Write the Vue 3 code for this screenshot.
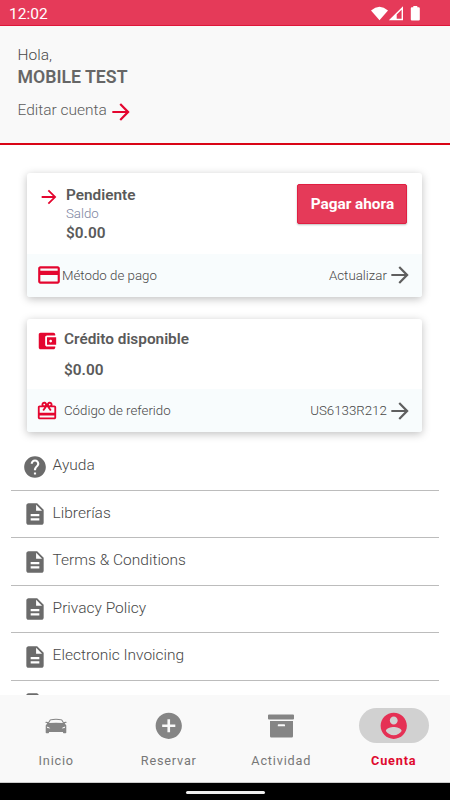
<script setup>
const links = [
  { label: 'Ayuda', icon: 'help' },
  { label: 'Librerías', icon: 'doc' },
  { label: 'Terms & Conditions', icon: 'doc' },
  { label: 'Privacy Policy', icon: 'doc' },
  { label: 'Electronic Invoicing', icon: 'doc' },
  { label: '', icon: 'doc' }
]
const paths = {
  arrow: 'M12 4l-1.41 1.41L16.17 11H4v2h12.17l-5.58 5.59L12 20l8-8z',
  card: 'M20 4H4c-1.11 0-1.99.89-1.99 2L2 18c0 1.11.89 2 2 2h16c1.11 0 2-.89 2-2V6c0-1.11-.89-2-2-2zm0 14H4v-6h16v6zm0-10H4V6h16v2z',
  wallet: 'M21 18v1c0 1.1-.9 2-2 2H5c-1.11 0-2-.9-2-2V5c0-1.1.89-2 2-2h14c1.1 0 2 .9 2 2v1h-9c-1.11 0-2 .9-2 2v8c0 1.1.89 2 2 2h9zm-9-2h10V8H12v8zm4-2.5c-.83 0-1.5-.67-1.5-1.5s.67-1.5 1.5-1.5 1.5.67 1.5 1.5-.67 1.5-1.5 1.5z',
  gift: 'M20 6h-2.18c.11-.31.18-.65.18-1 0-1.66-1.34-3-3-3-1.05 0-1.96.54-2.5 1.35l-.5.67-.5-.68C10.96 2.54 10.05 2 9 2 7.34 2 6 3.34 6 5c0 .35.07.69.18 1H4c-1.11 0-1.99.89-1.99 2L2 19c0 1.11.89 2 2 2h16c1.11 0 2-.89 2-2V8c0-1.11-.89-2-2-2zm-5-2c.55 0 1 .45 1 1s-.45 1-1 1-1-.45-1-1 .45-1 1-1zM9 4c.55 0 1 .45 1 1s-.45 1-1 1-1-.45-1-1 .45-1 1-1zm11 15H4v-2h16v2zm0-5H4V8h5.08L7 10.83 8.62 12 11 8.76l1-1.36 1 1.36L15.38 12 17 10.83 14.92 8H20v6z',
  help: 'M12 2C6.48 2 2 6.48 2 12s4.48 10 10 10 10-4.48 10-10S17.52 2 12 2zm1 17h-2v-2h2v2zm2.07-7.75l-.9.92C13.45 12.9 13 13.5 13 15h-2v-.5c0-1.1.45-2.1 1.17-2.83l1.24-1.26c.37-.36.59-.86.59-1.41 0-1.1-.9-2-2-2s-2 .9-2 2H8c0-2.21 1.79-4 4-4s4 1.79 4 4c0 .88-.36 1.68-.93 2.25z',
  doc: 'M14 2H6c-1.1 0-1.99.9-1.99 2L4 20c0 1.1.89 2 1.99 2H18c1.1 0 2-.9 2-2V8l-6-6zm2 16H8v-2h8v2zm0-4H8v-2h8v2zm-3-5V3.500L18.500 9H13z',
  add: 'M12 2C6.48 2 2 6.48 2 12s4.48 10 10 10 10-4.48 10-10S17.52 2 12 2zm5 11h-4v4h-2v-4H7v-2h4V7h2v4h4v2z',
  user: 'M12 2C6.48 2 2 6.48 2 12s4.48 10 10 10 10-4.48 10-10S17.52 2 12 2zm0 3c1.66 0 3 1.34 3 3s-1.34 3-3 3-3-1.34-3-3 1.34-3 3-3zm0 14.2c-2.5 0-4.71-1.28-6-3.22.03-1.99 4-3.08 6-3.08 1.99 0 5.97 1.09 6 3.08-1.29 1.94-3.5 3.22-6 3.22z'
}
</script>

<template>
  <div class="screen">
    <div class="status">
      <span>12:02</span>
      <svg class="signals" width="52" height="18" viewBox="0 0 52 18">
        <path fill="#fff" d="M0 4.400Q8.500-2.800 17 4.400L8.500 14.200Z" />
        <path fill="#fff" fill-rule="evenodd" d="M17.800 14.300L32 0.300V14.300ZM25.700 12.800H30.600V3.800L25.700 8.500Z" />
        <path fill="#fff" d="M42.300 0h4v1.200h1.400q1.100 0 1.100 1.100v11.100q0 1.100-1.100 1.100h-6.800q-1.100 0-1.100-1.100V2.300q0-1.100 1.100-1.100h1.400z" />
      </svg>
    </div>

    <header class="head">
      <div class="hello">Hola,</div>
      <div class="name">MOBILE TEST</div>
      <div class="edit">
        <span>Editar cuenta</span>
        <svg class="red i26" viewBox="0 0 24 24"><path :d="paths.arrow" /></svg>
      </div>
    </header>

    <main class="body">
      <section class="card first">
        <div class="top">
          <svg class="red i22" viewBox="0 0 24 24"><path :d="paths.arrow" /></svg>
          <div class="info">
            <div class="title">Pendiente</div>
            <div class="saldo">Saldo</div>
            <div class="amount">$0.00</div>
          </div>
          <button class="pay">Pagar ahora</button>
        </div>
        <div class="foot">
          <svg class="red i26" viewBox="0 0 24 24"><path :d="paths.card" /></svg>
          <span>Método de pago</span>
          <span class="action">Actualizar</span>
          <svg class="grey i26" viewBox="0 0 24 24"><path :d="paths.arrow" /></svg>
        </div>
      </section>

      <section class="card second">
        <div class="top">
          <svg class="red i22" viewBox="0 0 24 24"><path :d="paths.wallet" /></svg>
          <div class="info">
            <div class="title">Crédito disponible</div>
            <div class="amount">$0.00</div>
          </div>
        </div>
        <div class="foot">
          <svg class="red i22" viewBox="0 0 24 24"><path :d="paths.gift" /></svg>
          <span class="code">Código de referido</span>
          <span class="action">US6133R212</span>
          <svg class="grey i26" viewBox="0 0 24 24"><path :d="paths.arrow" /></svg>
        </div>
      </section>

      <ul class="links">
        <li v-for="(l, i) in links" :key="i">
          <svg class="i26" viewBox="0 0 24 24"><path :d="paths[l.icon]" /></svg>
          <span>{{ l.label }}</span>
        </li>
      </ul>
    </main>

    <nav class="nav">
      <div class="tab">
        <div class="pill">
          <svg width="24" height="16" viewBox="0 0 24 16">
            <path fill-rule="evenodd" d="M1 4Q3.200 3.200 4.200 4.300L6 1.500Q12 .2 18 1.500L19.800 4.300Q20.800 3.200 23 4Q22.500 5 20.700 5.200L22.300 7.500V14.500Q22.300 15.200 21.500 15.200H19.700Q19 15.200 19 14.500V14H5V14.500Q5 15.200 4.300 15.200H2.500Q1.700 15.200 1.700 14.500V7.500L3.300 5.200Q1.500 5 1 4ZM5 5Q12 4.400 19 5L17.300 2.200Q12 1.300 6.700 2.200ZM2.800 8.600L3.200 9.900L6.300 10.500Q5.500 9.100 2.800 8.600ZM21.200 8.600Q18.500 9.100 17.700 10.500L20.800 9.900Z" />
          </svg>
        </div>
        <span>Inicio</span>
      </div>
      <div class="tab">
        <div class="pill"><svg class="i31" viewBox="0 0 24 24"><path :d="paths.add" /></svg></div>
        <span>Reservar</span>
      </div>
      <div class="tab">
        <div class="pill">
          <svg width="26" height="24" viewBox="0 0 26 24">
            <path fill-rule="evenodd" d="M1 .5H25Q26 .5 26 1.500V4.500Q26 5.500 25 5.500H1Q0 5.500 0 4.500V1.500Q0 .5 1 .5ZM2 7H25V22.300Q25 23.500 23.800 23.500H3.200Q2 23.500 2 22.300ZM10.500 10.300Q9.800 10.300 9.800 11V12.200H17V11Q17 10.300 16.300 10.300Z" />
          </svg>
        </div>
        <span>Actividad</span>
      </div>
      <div class="tab active">
        <div class="pill"><svg class="i31" viewBox="0 0 24 24"><path :d="paths.user" /></svg></div>
        <span>Cuenta</span>
      </div>
    </nav>
    <div class="system"><i></i></div>
  </div>
</template>

<style>
body { margin: 0; background: #fff; }
</style>

<style scoped>
* { box-sizing: border-box; }
.screen {
  width: 450px; height: 800px; overflow: hidden; display: flex; flex-direction: column;
  font-family: Roboto, "Liberation Sans", sans-serif; color: #484848; background: #fff; font-weight: 350;
}
svg { display: block; flex: none; }
.i22 { width: 22px; height: 22px; }
.i26 { width: 26px; height: 26px; }
.i31 { width: 31.500px; height: 31.500px; }
.red { fill: #e4062f; }
.grey { fill: #5f5f5f; }
.status {
  height: 26px; flex: none; display: flex; justify-content: space-between; align-items: flex-start;
  background: #e53a59; border-bottom: 1px solid #df1639; color: #fff;
  padding: 5px 27px 0 9px; font-size: 15.500px; line-height: 18px; font-weight: 400;
}
.signals { margin-top: 1px; }
.head {
  height: 119px; flex: none; background: #f9f9f9; border-bottom: 2px solid #d90416;
  padding: 19px 17.500px 0; line-height: 20px;
}
.hello { font-size: 15.500px; }
.name { margin-top: 2px; font-size: 17.700px; font-weight: 600; color: #666; }
.edit { margin-top: 12px; display: flex; align-items: center; font-size: 15.500px; height: 24px; color: #5c5c5c; }
.edit span { margin-top: -2px; width: 90.500px; white-space: nowrap; }
.edit svg { margin-top: 2px; }
.body { flex: 1; min-height: 0; overflow: hidden; padding: 27.500px 11px 0; }
.card {
  margin: 0 16.400px; width: 395px; border-radius: 3px; background: #fff; overflow: hidden;
  box-shadow: 0 2px 8px rgba(0,0,0,.25); display: flex; flex-direction: column;
}
.first { height: 124px; }
.second { height: 113px; margin-top: 22.900px; }
.top { flex: 1; display: flex; align-items: flex-start; }
.foot { display: flex; align-items: center; background: #f8fcfd; height: 43px; padding: 0 9.500px 0 8.600px; font-size: 13.300px; }
.first .top { padding: 11px 15px 0 10.600px; }
.first .top svg { margin-top: 2px; }
.first .info { margin-left: 6px; flex: 1; }
.title { font-weight: 600; font-size: 15.350px; line-height: 22px; }
.saldo { font-size: 13.300px; line-height: 16px; color: #7d84a0; }
.amount { font-size: 15.350px; line-height: 22px; font-weight: 600; }
.title, .amount { color: #5a5a5a; }
.pay {
  width: 110px; height: 40px; border: 1px solid #e01f42; border-radius: 2px; background: #e53a59; color: #fff; padding: 0;
  font: 700 15.350px Roboto, sans-serif; box-shadow: 0 1px 2px rgba(0,0,0,.25);
}
.second .top { padding: 8.500px 10px 0 8.600px; }
.second .top svg { margin-top: 2px; }
.second .info { margin-left: 6px; }
.second .amount { margin-top: 9px; }
.code { margin-left: 6px; }
.action { margin-left: auto; }
.links { list-style: none; margin: 11px 0 0; padding: 0; }
.links li {
  height: 47.500px; border-bottom: 1px solid #bcbcbc; display: flex; align-items: center;
  padding-left: 11px; font-size: 15.500px; line-height: 20px;
}
.links svg { fill: #6b6b6b; }
.links span { margin-left: 4.600px; margin-top: -3px; }
.nav { height: 88px; flex: none; background: #f9f9f9; border-bottom: 1px solid #ccc; display: flex; padding-top: 13px; }
.tab {
  flex: 1; display: flex; flex-direction: column; align-items: center; color: #777;
  font-size: 12.700px; font-weight: 450; letter-spacing: .8px; line-height: 16px;
}
.tab svg { fill: #858585; }
.pill { width: 70px; height: 35px; border-radius: 18px; display: flex; align-items: center; justify-content: center; margin-bottom: 10px; }
.tab.active { color: #df0a2e; font-weight: 700; }
.active .pill { background: #d1d1d1; }
.active svg { fill: #e53155; }
.system { height: 17px; flex: none; background: #000; display: flex; justify-content: center; padding-top: 8px; }
.system i { width: 79px; height: 2.500px; border-radius: 2px; background: #eee; }
</style>
